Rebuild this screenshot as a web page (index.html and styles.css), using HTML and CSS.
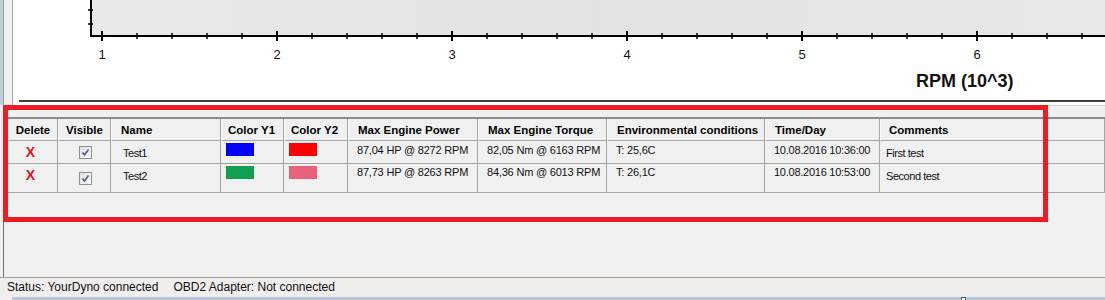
FILE: index.html
```html
<!DOCTYPE html>
<html>
<head>
<meta charset="utf-8">
<link rel="stylesheet" href="styles.css">
</head>
<body>
<div class="app">
  <div class="chart-row">
    <div class="chart-frame">
      <div class="chart">
        <svg class="plot" width="1092" height="105" viewBox="0 0 1092 105">
          <defs>
            <linearGradient id="bg" x1="0" y1="0" x2="1" y2="0">
              <stop offset="0" stop-color="#e9e9e9"/>
              <stop offset="0.5" stop-color="#e2e2e2"/>
              <stop offset="1" stop-color="#e8e8e8"/>
            </linearGradient>
          </defs>
          <rect x="78" y="0" width="1014" height="36" fill="url(#bg)"/>
          <path d="M78 0V37M77 36H1092" stroke="#000" stroke-width="2" fill="none"/>
          <path d="M75 10H80M75 24H80" stroke="#000" stroke-width="1.5"/>
          <path d="M89 31V41M264 31V41M439 31V41M614 31V41M789 31V41M964 31V41" stroke="#000" stroke-width="2"/>
          <path d="M124 33V39M159 33V39M194 33V39M229 33V39M299 33V39M334 33V39M369 33V39M404 33V39M474 33V39M509 33V39M544 33V39M579 33V39M649 33V39M684 33V39M719 33V39M754 33V39M824 33V39M859 33V39M894 33V39M929 33V39M999 33V39M1034 33V39M1069 33V39" stroke="#000" stroke-width="1.5"/>
          <g class="ticklbl">
            <text x="89" y="59">1</text>
            <text x="264" y="59">2</text>
            <text x="439" y="59">3</text>
            <text x="614" y="59">4</text>
            <text x="789" y="59">5</text>
            <text x="964" y="59">6</text>
          </g>
          <text class="axis-title" x="903" y="87">RPM (10^3)</text>
          <path d="M6 101H1092" stroke="#000" stroke-width="1.5"/>
        </svg>
      </div>
    </div>
  </div>

  <div class="lower">
    <div class="grid">
      <div class="h c-center">Delete</div>
      <div class="h c-center">Visible</div>
      <div class="h pad-name">Name</div>
      <div class="h pad-col">Color Y1</div>
      <div class="h pad-col">Color Y2</div>
      <div class="h pad-num">Max Engine Power</div>
      <div class="h pad-num">Max Engine Torque</div>
      <div class="h pad-num">Environmental conditions</div>
      <div class="h pad-num">Time/Day</div>
      <div class="h pad-com">Comments</div>

      <div class="d del">X</div>
      <div class="d vis"><span class="chk"><svg width="9" height="9" viewBox="0 0 9 9"><path d="M1.5 4.5L3.5 7L7.5 1.5" stroke="#4a5a8a" stroke-width="1.6" fill="none"/></svg></span></div>
      <div class="d txt pad-name2">Test1</div>
      <div class="d sw"><span class="swatch blue"></span></div>
      <div class="d sw"><span class="swatch red"></span></div>
      <div class="d num pad-num">87,04 HP @ 8272 RPM</div>
      <div class="d num pad-num">82,05 Nm @ 6163 RPM</div>
      <div class="d num pad-num env">T: 25,6C</div>
      <div class="d num pad-num time">10.08.2016 10:36:00</div>
      <div class="d txt pad-com2">First test</div>

      <div class="d del last">X</div>
      <div class="d vis last"><span class="chk"><svg width="9" height="9" viewBox="0 0 9 9"><path d="M1.5 4.5L3.5 7L7.5 1.5" stroke="#4a5a8a" stroke-width="1.6" fill="none"/></svg></span></div>
      <div class="d txt pad-name2 last">Test2</div>
      <div class="d sw last"><span class="swatch green"></span></div>
      <div class="d sw last"><span class="swatch pink"></span></div>
      <div class="d num pad-num last2">87,73 HP @ 8263 RPM</div>
      <div class="d num pad-num last2">84,36 Nm @ 6013 RPM</div>
      <div class="d num pad-num env last2">T: 26,1C</div>
      <div class="d num pad-num time last2">10.08.2016 10:53:00</div>
      <div class="d txt pad-com2 last">Second test</div>
    </div>
  </div>

  <div class="status">
    <span>Status: YourDyno connected</span>
    <span>OBD2 Adapter: Not connected</span>
  </div>
  <div class="strip"><span class="grip"></span></div>

  <div class="annot"></div>
</div>
</body>
</html>
```

FILE: styles.css
```css
html, body {
  margin: 0;
  padding: 0;
}
body {
  width: 1105px;
  height: 300px;
  overflow: hidden;
  background: #f0f0f0;
  font-family: "Liberation Sans", Arial, sans-serif;
  color: #000;
}
.app {
  position: relative;
  width: 1105px;
  height: 300px;
  display: flex;
  flex-direction: column;
}

/* chart */
.chart-row {
  height: 105px;
  display: flex;
  background: #c3cedb;
  padding-left: 3px;
  flex: none;
}
.chart-frame {
  flex: 1;
  display: flex;
  background: #f0f0f0;
  border-left: 1px solid #9c9c9c;
  padding-left: 8px;
}
.chart {
  flex: 1;
  background: #fff;
  border-left: 1px solid #a8a8a8;
  overflow: hidden;
}
.plot {
  display: block;
}
.ticklbl text {
  font-family: "Liberation Sans", Arial, sans-serif;
  font-size: 13px;
  text-anchor: middle;
  fill: #111;
}
.axis-title {
  font-family: "Liberation Sans", Arial, sans-serif;
  font-size: 18px;
  font-weight: bold;
  fill: #111;
}

/* lower grid panel */
.lower {
  flex: none;
  height: 172px;
  box-sizing: border-box;
  margin-left: 3px;
  border-left: 1px solid #707070;
  border-top: 1px solid #d2d2d2;
  padding: 11px 0 0 4px;
  background: #f0f0f0;
}
.grid {
  display: grid;
  grid-template-columns: 50px 53px 110px 63px 64px 130px 129px 158px 115px 225px;
  grid-template-rows: 22px 23px 29px;
  border-top: 2px solid #8b8b8b;
  width: 1097px;
}
.grid > div {
  box-sizing: border-box;
  border-right: 1px solid #a4a4a4;
  border-bottom: 1px solid #a4a4a4;
  white-space: nowrap;
  overflow: hidden;
}
.h {
  font-weight: bold;
  font-size: 11.5px;
  line-height: 21px;
  padding-top: 1px;
  border-left: 1px solid #fbfbfb;
}
.c-center { text-align: center; }
.pad-name { padding-left: 9px; }
.pad-col { padding-left: 6px; }
.pad-num { padding-left: 9px; }
.pad-com { padding-left: 8px; }

.d {
  font-size: 11px;
  color: #111;
}
.num {
  line-height: 13px;
  padding-top: 3px;
  letter-spacing: -0.2px;
}
.num.last2 { padding-top: 2px; }
.time { letter-spacing: -0.25px; }
.txt {
  line-height: 13px;
  padding-top: 6px;
  letter-spacing: -0.45px;
}
.pad-name2 { padding-left: 12px; }
.pad-com2 { padding-left: 6px; }

.del {
  text-align: center;
  color: #e3121b;
  font-weight: bold;
  font-size: 14px;
  line-height: 16px;
  padding-top: 3px;
  padding-right: 4px;
}
.vis {
  display: flex;
  align-items: center;
  justify-content: center;
  padding-left: 2px;
}
.chk {
  width: 11px;
  height: 11px;
  border: 1px solid #8e8f8f;
  background: linear-gradient(135deg, #dcdcdc, #fcfcfc);
  display: flex;
  align-items: center;
  justify-content: center;
}
.chk svg { display: block; }

.sw {
  padding: 2px 0 0 5px;
}
.swatch {
  display: block;
  width: 28px;
  height: 13px;
}
.blue { background: #0000ff; }
.red { background: #ff0000; }
.green { background: #10a04f; }
.pink { background: #e9607b; }

/* status bar */
.status {
  flex: none;
  height: 20px;
  box-sizing: border-box;
  border-top: 1px solid #a09c9c;
  background: #f0eded;
  font-size: 12px;
  line-height: 19px;
  padding-left: 7px;
  display: flex;
  gap: 15px;
  color: #111;
}
.strip {
  flex: none;
  height: 3px;
  margin-left: 12px;
  background: #b8c8dc;
  position: relative;
}
.grip {
  position: absolute;
  left: 949px;
  top: 0;
  width: 3px;
  height: 3px;
  border: 1px solid #555;
  background: #fff;
}

/* annotation overlay */
.annot {
  position: absolute;
  left: 3px;
  top: 105px;
  width: 1045px;
  height: 117px;
  box-sizing: border-box;
  border: 5px solid #ed1c24;
  pointer-events: none;
}
```
